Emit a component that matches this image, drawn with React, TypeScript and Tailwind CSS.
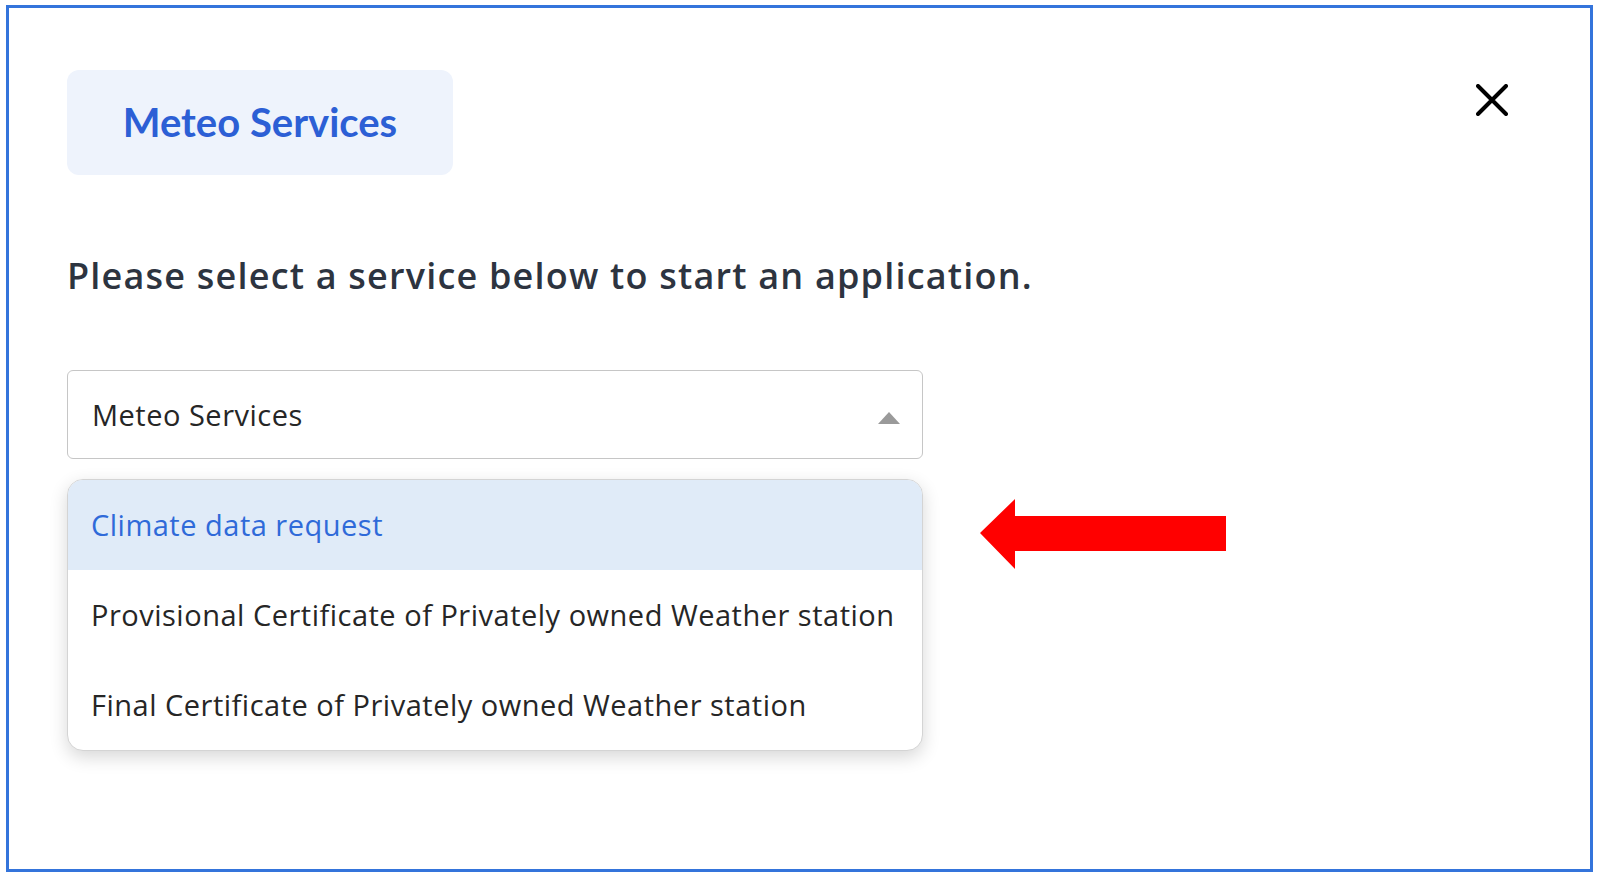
const options = [
  "Climate data request",
  "Provisional Certificate of Privately owned Weather station",
  "Final Certificate of Privately owned Weather station",
];

function RedArrow() {
  return (
    <svg width="246" height="70" viewBox="0 0 246 70" className="mt-[20px] ml-[57px] shrink-0">
      <polygon points="0,34 35,0 35,17 246,17 246,52 35,52 35,70" fill="#ff0000" />
    </svg>
  );
}

function CloseIcon() {
  return (
    <svg width="32" height="32" viewBox="0 0 32 32" className="mt-[14px]">
      <path d="M2 2 L30 30 M30 2 L2 30" stroke="#000" strokeWidth="4" strokeLinecap="round" />
    </svg>
  );
}

export default function App() {
  return (
    <div className="h-[878px] w-[1600px] bg-white pt-[5px] pl-[6px] font-['Open_Sans',sans-serif]">
      <div className="flex h-[867px] w-[1587px] flex-col border-[3px] border-[#3474db] pt-[62px] pr-[82px] pl-[58px]">
        <div className="flex items-start justify-between">
          <div className="flex h-[105px] w-[386px] items-center justify-center rounded-[12px] bg-[#eef3fc] pb-[2px]">
            <span className="font-['Lato',sans-serif] text-[40px] font-bold text-[#2c5fd5]">Meteo Services</span>
          </div>
          <CloseIcon />
        </div>

        <h1 className="mt-[79px] text-[36px] leading-[43px] font-semibold tracking-[1.2px] text-[#2d3440]">
          Please select a service below to start an application.
        </h1>

        <div className="mt-[73px] flex h-[89px] w-[856px] items-center justify-between rounded-[6px] border border-[#c6c6c6] pr-[22px] pl-[24px]">
          <span className="text-[29px] tracking-[0.5px] text-[#262626]">Meteo Services</span>
          <svg width="22" height="12" viewBox="0 0 22 12" className="mt-[6px]">
            <polygon points="0,12 11,0 22,12" fill="#9a9a9a" />
          </svg>
        </div>

        <div className="mt-[20px] flex items-start">
          <div className="w-[856px] overflow-hidden rounded-[16px] border border-[#d4d4d4] bg-white shadow-[0_6px_18px_rgba(0,0,0,0.16)]">
            {options.map((o, i) => (
              <div
                key={o}
                className={
                  i === 0
                    ? "flex h-[90px] items-center bg-[#e0ebf8] pl-[23px] text-[29px] tracking-[0.5px] text-[#2f6ad9]"
                    : "flex h-[90px] items-center pl-[23px] text-[29px] tracking-[0.5px] text-[#262626]"
                }
              >
                {o}
              </div>
            ))}
          </div>
          <RedArrow />
        </div>
      </div>
    </div>
  );
}
